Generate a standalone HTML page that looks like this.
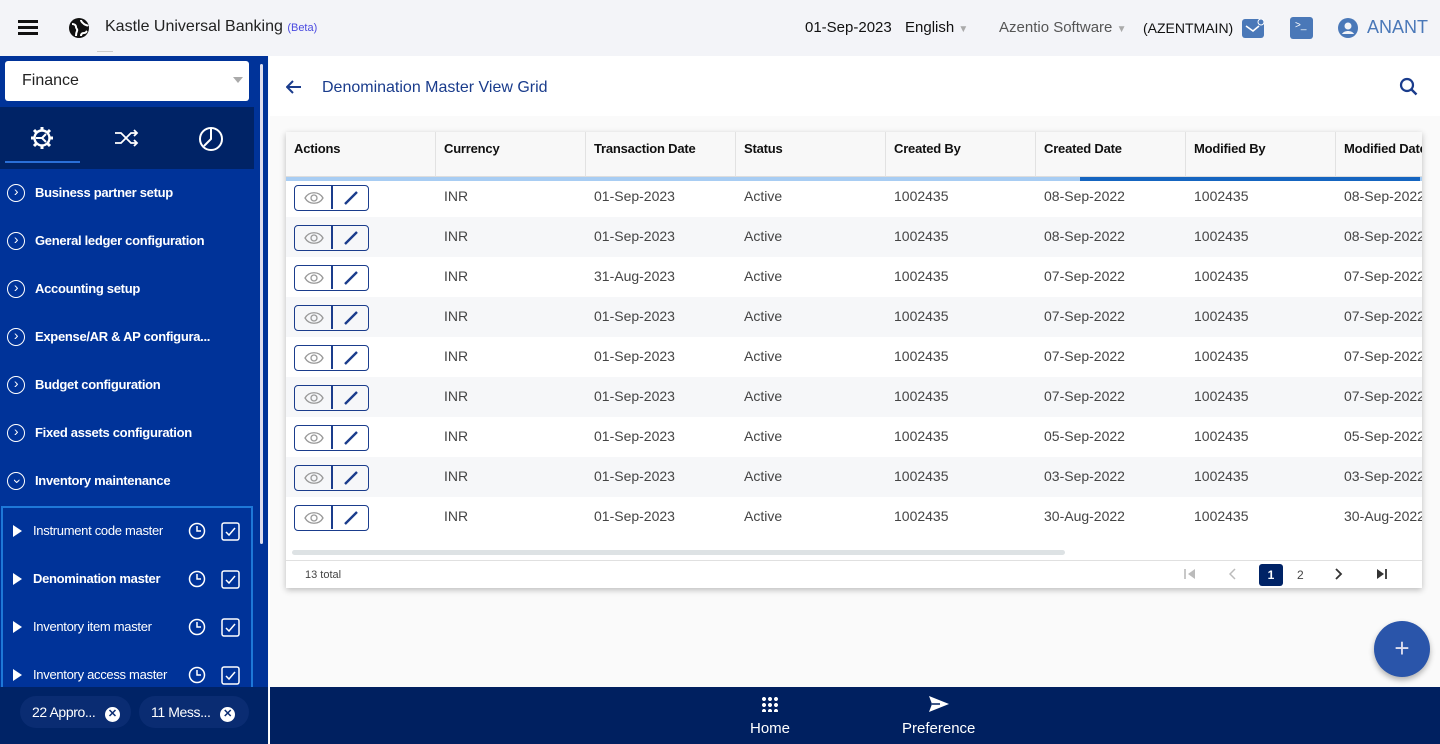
<!DOCTYPE html>
<html><head><meta charset="utf-8"><style>
*{box-sizing:border-box;margin:0;padding:0}
body{width:1440px;height:744px;overflow:hidden;font-family:"Liberation Sans",sans-serif;background:#fafafa;position:relative}
.top{position:absolute;left:0;top:0;width:1440px;height:56px;background:#f3f4f8}
.abs{position:absolute;white-space:nowrap}
.side{position:absolute;left:0;top:56px;width:268px;height:631px;background:#003399;overflow:hidden}
.nav{position:absolute;left:0;width:260px;color:#fff;font-size:13px;font-weight:bold;letter-spacing:-0.3px;white-space:nowrap}
.nav .c{position:absolute;left:7px;top:-9px;width:18px;height:18px;border:1.5px solid #fff;border-radius:50%;font-style:normal;font-size:14px;line-height:13px;text-align:center;font-weight:normal}
.nav span{position:absolute;left:35px;top:-8px}
.card{position:absolute;left:286px;top:132px;width:1136px;height:456px;background:#fff;box-shadow:0 2px 6px rgba(0,0,0,.25);overflow:hidden}
.th{position:absolute;top:0;height:45px;background:#f8f8f8;border-right:1px solid #e2e2e2;border-bottom:1px solid #ddd;font-size:13px;font-weight:bold;color:#111;padding:9px 8px;letter-spacing:-0.2px;white-space:nowrap}
.row{position:absolute;left:0;width:1136px;height:40px;font-size:14px;color:#444;white-space:nowrap}
.row div{position:absolute;top:11px}
.btn{position:absolute;left:8px;top:8px!important;width:75px;height:26px;border:1.5px solid #1a3c8c;border-radius:4px}
.btn i{position:absolute;left:36px;top:0;width:1.5px;height:23px;background:#1a3c8c}
</style></head><body>
<div class="top"></div>
<div class="abs" style="left:18px;top:20px;width:20px;height:2.5px;background:#111;box-shadow:0 6px 0 #111,0 12px 0 #111"></div>
<svg class="abs" style="left:69px;top:18px" width="20" height="20" viewBox="0 0 20 20"><circle cx="10" cy="10" r="10" fill="#111"/><path d="M3 6c2 0 4 1 4 3s2 2 1 4-1 3-1 5M12 2c0 2 2 3 3 4s3 1 4 2M12 18c0-2 1-3 3-3s2-1 3-2" stroke="#fff" stroke-width="2" fill="none"/></svg>
<div class="abs" style="left:105px;top:18px;font-size:16px;color:#222">Kastle Universal Banking <span style="font-size:11px;color:#4a4ae0">(Beta)</span></div>
<div class="abs" style="left:97px;top:51px;width:16px;height:1px;background:#ccc"></div>
<div class="abs" style="left:805px;top:19px;font-size:15px;color:#111">01-Sep-2023</div>
<div class="abs" style="left:905px;top:19px;font-size:15px;color:#111">English <span style="color:#aaa;font-size:10px">▼</span></div>
<div class="abs" style="left:999px;top:19px;font-size:15px;color:#555">Azentio Software <span style="color:#aaa;font-size:10px">▼</span></div>
<div class="abs" style="left:1143px;top:20px;font-size:14px;color:#111">(AZENTMAIN)</div>
<div class="abs" style="left:1242px;top:19px;width:22px;height:19px;background:#4a78b8;border-radius:3px"><svg width="22" height="19"><path d="M4 7l7 5 6-5" stroke="#fff" stroke-width="1.6" fill="none"/><circle cx="19" cy="3" r="3" fill="#4a78b8" stroke="#fff" stroke-width="1"/></svg></div>
<div class="abs" style="left:1290px;top:17px;width:23px;height:22px;background:#4a78b8;border-radius:3px;color:#fff;font-size:10px;padding:3px 0 0 5px">&gt;_</div>
<svg class="abs" style="left:1338px;top:18px" width="20" height="20"><circle cx="10" cy="10" r="10" fill="#4a78b8"/><circle cx="10" cy="8" r="3.5" fill="#f3f4f8"/><path d="M4 16c2-4 10-4 12 0" fill="#f3f4f8"/></svg>
<div class="abs" style="left:1367px;top:17px;font-size:18px;color:#4a78b8">ANANT</div>

<div class="side">
<div class="abs" style="left:5px;top:5px;width:244px;height:40px;background:#fff;border-radius:3px;font-size:16px;color:#222;padding:11px 17px">Finance<span style="position:absolute;right:6px;top:16px;border:5px solid transparent;border-top:6px solid #aaa"></span></div>
<div class="abs" style="left:0;top:51px;width:254px;height:62px;background:#002366"></div>
<div class="abs" style="left:5px;top:105px;width:75px;height:2px;background:#2a6fd8"></div>
<svg class="abs" style="left:29px;top:69px" width="26" height="26" viewBox="0 0 26 26"><g stroke="#fff" stroke-width="3"><path d="M13 2v4M13 20v4M2 13h4M20 13h4M5 5l3 3M18 18l3 3M5 21l3-3M18 8l3-3"/></g><circle cx="13" cy="13" r="7.5" stroke="#fff" stroke-width="2.4" fill="#002366"/><path d="M13 13H7M13 13l4 4M13 13l4-4" stroke="#fff" stroke-width="2"/></svg>
<svg class="abs" style="left:114px;top:72px" width="26" height="20"><path d="M1 5h6l10 10h6M1 15h6l10-10h6M20 2l3 3-3 3M20 12l3 3-3 3" stroke="#fff" stroke-width="1.8" fill="none"/></svg>
<svg class="abs" style="left:198px;top:70px" width="26" height="26"><circle cx="13" cy="13" r="11" stroke="#fff" stroke-width="2" fill="none"/><path d="M13 2v11l-7 7" stroke="#fff" stroke-width="2" fill="none"/></svg>
<div class="abs" style="left:260px;top:8px;width:3px;height:480px;background:#dde;border-radius:2px"></div>
<div class="nav" style="top:137px"><i class="c">›</i><span>Business partner setup</span></div>
<div class="nav" style="top:185px"><i class="c">›</i><span>General ledger configuration</span></div>
<div class="nav" style="top:233px"><i class="c">›</i><span>Accounting setup</span></div>
<div class="nav" style="top:281px"><i class="c">›</i><span>Expense/AR &amp; AP configura...</span></div>
<div class="nav" style="top:329px"><i class="c">›</i><span>Budget configuration</span></div>
<div class="nav" style="top:377px"><i class="c">›</i><span>Fixed assets configuration</span></div>
<div class="nav" style="top:425px"><i class="c" style="transform:rotate(90deg)">›</i><span>Inventory maintenance</span></div>
<div class="abs" style="left:1px;top:450px;width:252px;height:190px;border:2px solid #1e78d8;border-bottom:0"></div>
<div id="sub"></div>
</div>
<div class="abs" style="left:0;top:687px;width:268px;height:57px;background:#002366"></div>
<div class="abs" style="left:20px;top:696px;width:111px;height:32px;border-radius:16px;background:#0a2c72;color:#fff;font-size:14px;padding:8px 12px;letter-spacing:-0.4px">22 Appro... <span style="display:inline-block;width:15px;height:15px;border-radius:50%;background:#fff;color:#0a2c72;font-size:11px;text-align:center;line-height:15px;font-weight:bold;margin-left:6px">✕</span></div>
<div class="abs" style="left:139px;top:696px;width:110px;height:32px;border-radius:16px;background:#0a2c72;color:#fff;font-size:14px;padding:8px 12px;letter-spacing:-0.4px">11 Mess... <span style="display:inline-block;width:15px;height:15px;border-radius:50%;background:#fff;color:#0a2c72;font-size:11px;text-align:center;line-height:15px;font-weight:bold;margin-left:6px">✕</span></div>

<div class="abs" style="left:270px;top:56px;width:1170px;height:60px;background:#fff"></div>
<svg class="abs" style="left:286px;top:80px" width="16" height="14"><path d="M15 7H2M7 1L1 7l6 6" stroke="#1a3c8c" stroke-width="2" fill="none"/></svg>
<div class="abs" style="left:322px;top:79px;font-size:16px;color:#1a3c8c">Denomination Master View Grid</div>
<svg class="abs" style="left:1399px;top:77px" width="20" height="20"><circle cx="8" cy="8" r="6" stroke="#1a3c8c" stroke-width="2.2" fill="none"/><path d="M12.5 12.5l5 5" stroke="#1a3c8c" stroke-width="2.4"/></svg>

<div class="card">
<div class="th" style="left:0;width:150px">Actions</div>
<div class="th" style="left:150px;width:150px">Currency</div>
<div class="th" style="left:300px;width:150px">Transaction Date</div>
<div class="th" style="left:450px;width:150px">Status</div>
<div class="th" style="left:600px;width:150px">Created By</div>
<div class="th" style="left:750px;width:150px">Created Date</div>
<div class="th" style="left:900px;width:150px">Modified By</div>
<div class="th" style="left:1050px;width:150px">Modified Date</div>
<div id="rows"></div>
<div class="abs" style="left:0;top:45px;width:1136px;height:4px;background:#a8cdf3;z-index:2"></div>
<div class="abs" style="left:794px;top:45px;width:340px;height:4px;background:#1565c0;z-index:2"></div>
<div class="abs" style="left:6px;top:418px;width:773px;height:5px;background:#dde2e4;border-radius:3px"></div>
<div class="abs" style="left:0;top:428px;width:1136px;height:1px;background:#e0e0e0"></div>
<div class="abs" style="left:19px;top:437px;font-size:11px;color:#444">13 total</div>
<svg class="abs" style="left:898px;top:436px" width="12" height="12"><path d="M1 1v10" stroke="#bbb" stroke-width="1.6"/><path d="M11 1L4 6l7 5z" fill="#bbb"/></svg>
<svg class="abs" style="left:943px;top:436px" width="8" height="12"><path d="M6 1L1 6l5 5" stroke="#bbb" stroke-width="1.5" fill="none"/></svg>
<div class="abs" style="left:973px;top:432px;width:24px;height:22px;background:#002366;border-radius:3px;color:#fff;font-size:12px;font-weight:bold;text-align:center;line-height:22px">1</div>
<div class="abs" style="left:1011px;top:436px;font-size:12px;color:#444">2</div>
<svg class="abs" style="left:1049px;top:436px" width="8" height="12"><path d="M1 1l5 5-5 5" stroke="#333" stroke-width="1.8" fill="none"/></svg>
<svg class="abs" style="left:1090px;top:436px" width="12" height="12"><path d="M1 1l7 5-7 5z" fill="#333"/><path d="M10 1v10" stroke="#333" stroke-width="1.8"/></svg>
</div>

<div class="abs" style="left:1374px;top:621px;width:56px;height:56px;border-radius:50%;background:#2a55aa;box-shadow:0 3px 6px rgba(0,0,0,.3);color:#dde;font-size:26px;text-align:center;line-height:54px;font-weight:300">+</div>
<div class="abs" style="left:269px;top:56px;width:1px;height:688px;background:#fff"></div>
<div class="abs" style="left:270px;top:687px;width:1170px;height:57px;background:#002060"></div>
<div class="abs" style="left:761px;top:696px;width:18px;height:16px;background:radial-gradient(circle,#fff 1.8px,transparent 2.2px) 0 0/6px 6px"></div>
<div class="abs" style="left:750px;top:720px;color:#fff;font-size:15px">Home</div>
<svg class="abs" style="left:928px;top:695px" width="22" height="18"><path d="M1 1l20 8-20 8 3-8z" fill="#fff"/><path d="M4 9h8" stroke="#002060" stroke-width="1.5"/></svg>
<div class="abs" style="left:902px;top:720px;color:#fff;font-size:15px">Preference</div>
<script>
var d=[["01-Sep-2023","08-Sep-2022"],["01-Sep-2023","08-Sep-2022"],["31-Aug-2023","07-Sep-2022"],["01-Sep-2023","07-Sep-2022"],["01-Sep-2023","07-Sep-2022"],["01-Sep-2023","07-Sep-2022"],["01-Sep-2023","05-Sep-2022"],["01-Sep-2023","03-Sep-2022"],["01-Sep-2023","30-Aug-2022"]];
var h='';d.forEach(function(r,i){h+='<div class="row" style="top:'+(45+i*40)+'px;background:'+(i%2?'#f6f7f9':'#fff')+'"><div class="btn"><i></i><svg style="position:absolute;left:9px;top:5px" width="20" height="14"><path d="M1 7c4-7 14-7 18 0-4 7-14 7-18 0z" stroke="#999" stroke-width="1.3" fill="none"/><circle cx="10" cy="7" r="3" stroke="#999" stroke-width="1.3" fill="none"/></svg><svg style="position:absolute;left:47px;top:3px" width="18" height="18"><path d="M3 15L15 3" stroke="#1a3c8c" stroke-width="2.4"/></svg></div><div style="left:158px">INR</div><div style="left:308px">'+r[0]+'</div><div style="left:458px">Active</div><div style="left:608px">1002435</div><div style="left:758px">'+r[1]+'</div><div style="left:908px">1002435</div><div style="left:1058px">'+r[1]+'</div></div>'});
document.getElementById('rows').innerHTML=h;
var s=[["Instrument code master",0],["Denomination master",1],["Inventory item master",0],["Inventory access master",0]],g='';
s.forEach(function(x,i){var t=475+i*48;g+='<div class="abs" style="left:13px;top:'+(t-6)+'px;border:6px solid transparent;border-left:9px solid #fff;border-right:0"></div><div class="abs" style="left:33px;top:'+(t-8)+'px;color:#fff;font-size:13px;letter-spacing:-0.3px;font-weight:'+(x[1]?'bold':'normal')+'">'+x[0]+'</div><svg class="abs" style="left:188px;top:'+(t-9)+'px" width="18" height="18"><circle cx="9" cy="9" r="7.5" stroke="#fff" stroke-width="1.5" fill="none"/><path d="M9 4v5h4" stroke="#fff" stroke-width="1.5" fill="none"/></svg><svg class="abs" style="left:221px;top:'+(t-9)+'px" width="19" height="19"><rect x="1" y="1" width="17" height="17" rx="2" stroke="#fff" stroke-width="1.5" fill="none"/><path d="M5 10l3 3 6-7" stroke="#fff" stroke-width="1.5" fill="none"/></svg>'});
document.getElementById('sub').innerHTML=g;
</script>
</body></html>
